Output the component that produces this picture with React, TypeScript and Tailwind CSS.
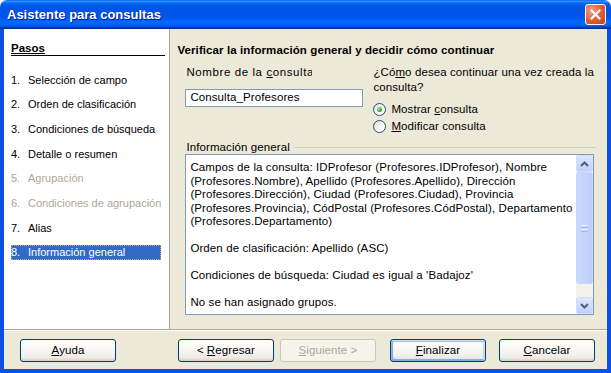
const steps = [
  { n: "1.", label: "Selección de campo" },
  { n: "2.", label: "Orden de clasificación" },
  { n: "3.", label: "Condiciones de búsqueda" },
  { n: "4.", label: "Detalle o resumen" },
  { n: "5.", label: "Agrupación", disabled: true },
  { n: "6.", label: "Condiciones de agrupación", disabled: true },
  { n: "7.", label: "Alias" },
  { n: "8.", label: "Información general", active: true },
];

const infoLines = [
  "Campos de la consulta: IDProfesor (Profesores.IDProfesor), Nombre",
  "(Profesores.Nombre), Apellido (Profesores.Apellido), Dirección",
  "(Profesores.Dirección), Ciudad (Profesores.Ciudad), Provincia",
  "(Profesores.Provincia), CódPostal (Profesores.CódPostal), Departamento",
  "(Profesores.Departamento)",
  "",
  "Orden de clasificación: Apellido (ASC)",
  "",
  "Condiciones de búsqueda: Ciudad es igual a 'Badajoz'",
  "",
  "No se han asignado grupos.",
];

function Radio({ checked, children }: { checked?: boolean; children: React.ReactNode }) {
  return (
    <div className="flex h-[17px] items-center gap-[5px]">
      <span className="flex h-[13px] w-[13px] items-center justify-center rounded-full border border-[#1C5180] bg-[linear-gradient(135deg,#DCDCD7,#FFFFFF_70%)]">
        {checked && (
          <span className="h-[5px] w-[5px] rounded-full bg-[radial-gradient(circle_at_35%_35%,#A8E8A6,#21A121_70%)]" />
        )}
      </span>
      <span>{children}</span>
    </div>
  );
}

function XpButton({
  children,
  disabled,
  isDefault,
  className = "",
}: {
  children: React.ReactNode;
  disabled?: boolean;
  isDefault?: boolean;
  className?: string;
}) {
  const base = "flex h-[23px] w-[96px] items-center justify-center rounded-[3px] border";
  const look = disabled
    ? "border-[#C9C7BA] bg-[#F5F4EA] text-[#ACA899]"
    : "border-[#003C74] bg-[linear-gradient(to_bottom,#FFFFFF,#F3F3EF_60%,#ECEBE6_85%,#D6D0C5)] text-black";
  const focus = isDefault
    ? "shadow-[inset_-1px_1px_#CEE7FF,inset_1px_2px_#98B8EA,inset_-2px_2px_#BCD4F6,inset_1px_-1px_#89ADE4,inset_2px_-2px_#89ADE4]"
    : "";
  return <div className={`${base} ${look} ${focus} ${className}`}>{children}</div>;
}

function Chevron({ up }: { up?: boolean }) {
  return (
    <svg width="9" height="6" viewBox="0 0 9 6">
      <path
        d={up ? "M1 5 L4.5 1.5 L8 5" : "M1 1 L4.5 4.5 L8 1"}
        fill="none"
        stroke="#4D6185"
        strokeWidth="2"
      />
    </svg>
  );
}

export default function App() {
  return (
    <div className="h-[373px] w-[611px] bg-white font-['Liberation_Sans',Arial,sans-serif] text-[11.5px] tracking-[0.1px] text-black">
      {/* title bar */}
      <div className="flex h-[29px] items-center justify-between rounded-t-[7px] bg-[linear-gradient(to_bottom,#0058EE_0%,#3593FF_4%,#288EFF_6%,#127DFF_8%,#036FFC_10%,#0262EE_14%,#0057E5_20%,#0054E3_24%,#0055EB_56%,#005BF5_66%,#026AFE_76%,#0062EF_86%,#0052D6_92%,#0040AB_94%,#003092_100%)] pl-[7px] pr-[5px]">
        <span className="text-[13px] font-bold tracking-normal text-white [text-shadow:1px_1px_0_#0A1883]">
          Asistente para consultas
        </span>
        <div className="flex h-[21px] w-[21px] items-center justify-center rounded-[3px] border border-white bg-[radial-gradient(circle_at_30%_30%,#F0A08A,#E15B32_55%,#C4401F)]">
          <svg width="11" height="11" viewBox="0 0 11 11">
            <path d="M1.5 1.5 L9.5 9.5 M9.5 1.5 L1.5 9.5" stroke="white" strokeWidth="2" strokeLinecap="square" />
          </svg>
        </div>
      </div>

      {/* window body */}
      <div className="flex h-[344px] flex-col border-x-4 border-b-4 border-[#0B50E2] bg-[#ECE9D8]">
        <div className="flex h-[300px]">
          {/* steps */}
          <div className="w-[168px] border-r border-[#ACA899] bg-white text-[11px] tracking-normal">
            <div className="ml-[7px] mr-[4px] mt-[13px] border-b border-black text-[11.5px] font-bold leading-[13px]">
              <span className="underline">Pasos</span>
            </div>
            <div className="mt-[11.7px]">
              {steps.map((s) => (
                <div key={s.n} className="flex h-[24.65px] items-center whitespace-nowrap pl-[7px]">
                  <div
                    className={`flex h-[15px] items-center ${
                      s.active
                        ? "w-[150px] border border-dotted border-[#D4A94E] bg-[#316AC5] text-white"
                        : s.disabled
                        ? "text-[#ACA899]"
                        : ""
                    }`}
                  >
                    <span className={`w-[17px] ${s.active ? "-ml-px" : ""}`}>{s.n}</span>
                    <span>{s.label}</span>
                  </div>
                </div>
              ))}
            </div>
          </div>

          {/* content */}
          <div className="flex-1 pl-[7px] pt-[14px]">
            <div className="font-bold leading-[14px]">
              Verificar la información general y decidir cómo continuar
            </div>
            <div className="ml-[8px] mr-[13px]">
              <div className="mt-[8px] flex gap-[10px]">
                <div className="w-[178px] shrink-0">
                  <div className="w-[127px] overflow-hidden whitespace-nowrap pl-px leading-[14px] tracking-[0.6px]">
                    Nombre de la <span className="underline">c</span>onsulta
                  </div>
                  <div className="mt-[10px] flex h-[18px] items-center border border-[#7F9DB9] bg-white pl-[4px]">
                    Consulta_Profesores
                  </div>
                </div>
                <div className="min-w-0 flex-1">
                  <div className="whitespace-nowrap leading-[15px]">
                    ¿Có<span className="underline">m</span>o desea continuar una vez creada la
                    <br />
                    consulta?
                  </div>
                  <div className="mt-[6px] whitespace-nowrap">
                    <Radio checked>
                      Mostrar <span className="underline">c</span>onsulta
                    </Radio>
                    <Radio>
                      <span className="underline">M</span>odificar consulta
                    </Radio>
                  </div>
                </div>
              </div>

              {/* group box */}
              <div className="mt-[6px] flex h-[13px] items-center gap-[4px] pl-px">
                <span className="leading-[13px]">Información general</span>
                <div className="mr-[-2px] h-px flex-1 bg-[#D0D0BF]" />
              </div>
              <div className="flex h-[161px] border border-[#7F9DB9] bg-white">
                <div className="flex-1 overflow-hidden whitespace-nowrap pl-[4px] pt-[6px] leading-[13.5px]">
                  {infoLines.map((l, i) => (
                    <div key={i} className="h-[13.5px]">
                      {l}
                    </div>
                  ))}
                </div>
                <div className="flex w-[17px] flex-col bg-[#FDFDFA]">
                  <div className="flex h-[17px] items-center justify-center rounded-[2px] border border-[#D2DDF7] bg-[linear-gradient(to_bottom,#DDE7FE,#BFD0FA)]">
                    <Chevron up />
                  </div>
                  <div className="flex h-[112px] items-center justify-center rounded-[2px] border border-[#C8D6F8] bg-[linear-gradient(to_right,#CBDAFD,#BCCDF9)]">
                    <div className="flex flex-col gap-[1px]">
                      <div className="h-px w-[7px] bg-[#EEF4FE]" />
                      <div className="h-px w-[7px] bg-[#A6BBEA]" />
                      <div className="h-px w-[7px] bg-[#EEF4FE]" />
                      <div className="h-px w-[7px] bg-[#A6BBEA]" />
                    </div>
                  </div>
                  <div className="flex-1 bg-[#F3F1EC]" />
                  <div className="flex h-[17px] items-center justify-center rounded-[2px] border border-[#D2DDF7] bg-[linear-gradient(to_bottom,#DDE7FE,#BFD0FA)]">
                    <Chevron />
                  </div>
                </div>
              </div>
            </div>
          </div>
        </div>

        {/* separator */}
        <div className="h-[2px] border-t border-b border-t-[#ACA899] border-b-white" />

        {/* buttons */}
        <div className="flex pl-[16px] pt-[8px]">
          <XpButton>
            <span className="underline">A</span>yuda
          </XpButton>
          <XpButton className="ml-[62px]">
            &lt; <span className="ml-[3px] underline">R</span>egresar
          </XpButton>
          <XpButton disabled className="ml-[6px]">
            <span className="underline">S</span>iguiente &gt;
          </XpButton>
          <XpButton isDefault className="ml-[14px]">
            <span className="underline">F</span>inalizar
          </XpButton>
          <XpButton className="ml-[13px]">
            <span className="underline">C</span>ancelar
          </XpButton>
        </div>
      </div>
    </div>
  );
}
